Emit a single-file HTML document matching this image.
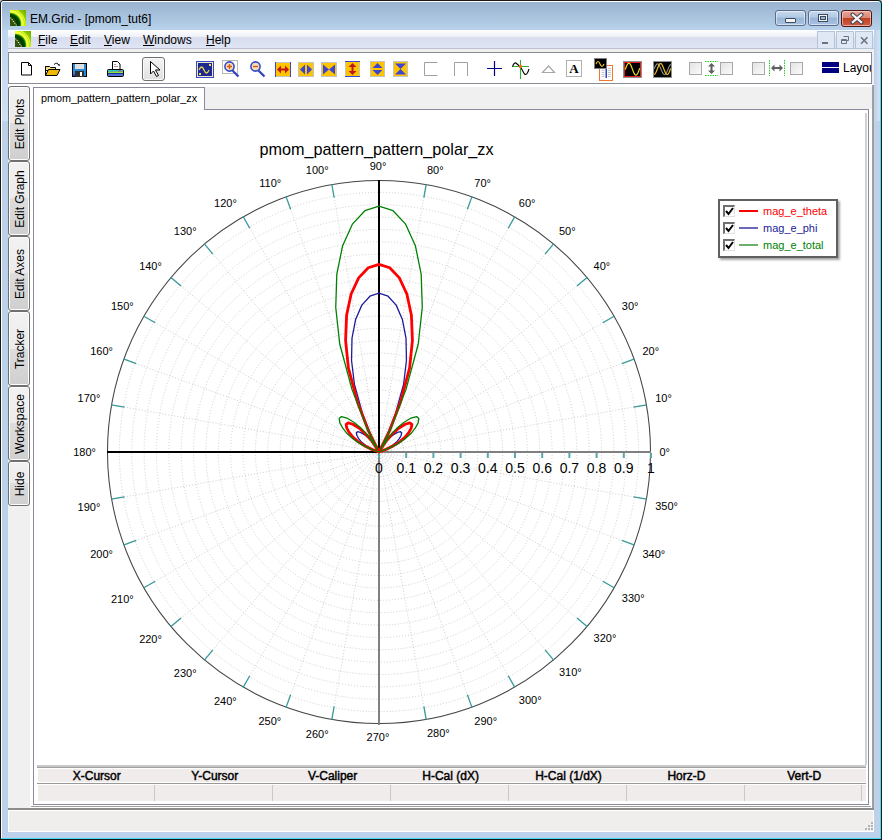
<!DOCTYPE html><html><head><meta charset="utf-8"><style>
html,body{margin:0;padding:0}
body{width:882px;height:840px;position:relative;overflow:hidden;background:#c4c8cc;font-family:"Liberation Sans", sans-serif}
div,svg{position:absolute}
svg text{font-family:"Liberation Sans", sans-serif}
</style></head><body>
<div style="left:0;top:0;width:882px;height:840px;background:#1a1a1a;border-radius:4px 4px 0 0"></div>
<div style="left:1px;top:1px;width:880px;height:838px;background:#48d8f0;border-radius:3px 3px 0 0"></div>
<div style="left:1px;top:1px;width:879px;height:837px;background:#fff;border-radius:3px 3px 0 0"></div>
<div style="left:2px;top:2px;width:878px;height:836px;background:#bcd2ea;border-radius:2px 2px 0 0"></div>
<div style="left:2px;top:2px;width:878px;height:28px;background:linear-gradient(#98b2cf,#b9d2eb);border-radius:2px 2px 0 0"></div>
<div style="left:2px;top:30px;width:6px;height:91px;background:linear-gradient(#c0d6ee,#cfe0f3)"></div>
<div style="left:874px;top:30px;width:6px;height:91px;background:linear-gradient(90deg,#bcd2ea,#d2e2f4)"></div>
<svg style="position:absolute;left:10px;top:10px" width="16" height="16" viewBox="0 0 16 16">
<defs><radialGradient id="lg10" cx="0" cy="14" r="21.3" gradientUnits="userSpaceOnUse">
<stop offset="0" stop-color="#3a5a10"/><stop offset="0.26" stop-color="#2a5000"/><stop offset="0.34" stop-color="#003a00"/><stop offset="0.45" stop-color="#004a00"/><stop offset="0.5" stop-color="#30a000"/><stop offset="0.55" stop-color="#f0ff30"/><stop offset="0.63" stop-color="#f4ff40"/><stop offset="0.67" stop-color="#b8e800"/><stop offset="0.71" stop-color="#d8ff40"/><stop offset="0.76" stop-color="#90c800"/><stop offset="1" stop-color="#70a800"/></radialGradient></defs>
<rect width="16" height="16" fill="url(#lg10)"/>
<path d="M0.5 7.5 L6.5 15.5" stroke="#e8e8e0" stroke-width="1.1" stroke-dasharray="1.2 1"/>
</svg>
<div style="left:30px;top:11px;height:16px;line-height:16px;font-size:12px;color:#000;white-space:nowrap">EM.Grid - [pmom_tut6]</div>
<div style="position:absolute;left:775px;top:10px;width:31px;height:16px;border:1px solid #5a6e8c;border-radius:3px;background:linear-gradient(#c8daee 0%,#b0c8e4 45%,#98b4d6 50%,#a8c2e2 100%);box-sizing:border-box;box-shadow:inset 0 0 0 1px rgba(255,255,255,0.5)"></div>
<div style="position:absolute;left:808px;top:10px;width:31px;height:16px;border:1px solid #5a6e8c;border-radius:3px;background:linear-gradient(#c8daee 0%,#b0c8e4 45%,#98b4d6 50%,#a8c2e2 100%);box-sizing:border-box;box-shadow:inset 0 0 0 1px rgba(255,255,255,0.5)"></div>
<div style="position:absolute;left:841px;top:10px;width:31px;height:17px;border:1px solid #4a1818;border-radius:3px;background:linear-gradient(#e8a898 0%,#d88878 45%,#c04020 50%,#d06048 100%);box-sizing:border-box;box-shadow:inset 0 0 0 1px rgba(255,220,210,0.6)"></div>
<div style="position:absolute;left:785px;top:18px;width:11px;height:5px;background:#f4f4f4;border:1px solid #3a4a60;border-radius:1px;box-sizing:border-box"></div>
<div style="position:absolute;left:818px;top:14px;width:10px;height:8px;border:1px solid #3a4a60;box-sizing:border-box;background:#f4f4f4"></div>
<div style="position:absolute;left:820px;top:16px;width:6px;height:4px;border:1px solid #3a4a60;box-sizing:border-box;background:#9ab4d4"></div>
<svg style="position:absolute;left:849px;top:12px" width="16" height="13" viewBox="0 0 16 13"><path d="M3.5 2.5 L12.5 10.5 M12.5 2.5 L3.5 10.5" stroke="#3a3a48" stroke-width="4" stroke-linecap="round"/><path d="M3.8 2.8 L12.2 10.2 M12.2 2.8 L3.8 10.2" stroke="#f4f4f4" stroke-width="2.2" stroke-linecap="square"/></svg>
<div style="left:8px;top:30px;width:866px;height:18px;background:linear-gradient(#ffffff 0%,#eef0f8 38%,#d8ddef 42%,#e0e5f5 100%)"></div>
<div style="left:8px;top:48px;width:866px;height:1px;background:#bcc0d0"></div>
<svg style="position:absolute;left:15px;top:31px" width="16" height="16" viewBox="0 0 16 16">
<defs><radialGradient id="lg15" cx="0" cy="14" r="21.3" gradientUnits="userSpaceOnUse">
<stop offset="0" stop-color="#3a5a10"/><stop offset="0.26" stop-color="#2a5000"/><stop offset="0.34" stop-color="#003a00"/><stop offset="0.45" stop-color="#004a00"/><stop offset="0.5" stop-color="#30a000"/><stop offset="0.55" stop-color="#f0ff30"/><stop offset="0.63" stop-color="#f4ff40"/><stop offset="0.67" stop-color="#b8e800"/><stop offset="0.71" stop-color="#d8ff40"/><stop offset="0.76" stop-color="#90c800"/><stop offset="1" stop-color="#70a800"/></radialGradient></defs>
<rect width="16" height="16" fill="url(#lg15)"/>
<path d="M0.5 7.5 L6.5 15.5" stroke="#e8e8e0" stroke-width="1.1" stroke-dasharray="1.2 1"/>
</svg>
<div style="position:absolute;left:38px;top:32px;height:16px;line-height:16px;font-size:12px;color:#000"><span style="text-decoration:underline">F</span>ile</div>
<div style="position:absolute;left:70px;top:32px;height:16px;line-height:16px;font-size:12px;color:#000"><span style="text-decoration:underline">E</span>dit</div>
<div style="position:absolute;left:104px;top:32px;height:16px;line-height:16px;font-size:12px;color:#000"><span style="text-decoration:underline">V</span>iew</div>
<div style="position:absolute;left:143px;top:32px;height:16px;line-height:16px;font-size:12px;color:#000"><span style="text-decoration:underline">W</span>indows</div>
<div style="position:absolute;left:206px;top:32px;height:16px;line-height:16px;font-size:12px;color:#000"><span style="text-decoration:underline">H</span>elp</div>
<div style="position:absolute;left:817px;top:31px;width:18px;height:18px;border:1px solid #b4c4d8;background:#dfe8f4;box-sizing:border-box"></div>
<div style="position:absolute;left:836px;top:31px;width:18px;height:18px;border:1px solid #b4c4d8;background:#dfe8f4;box-sizing:border-box"></div>
<div style="position:absolute;left:855px;top:31px;width:18px;height:18px;border:1px solid #b4c4d8;background:#dfe8f4;box-sizing:border-box"></div>
<div style="position:absolute;left:822px;top:42px;width:6px;height:2px;background:#6a7280"></div>
<svg style="position:absolute;left:836px;top:31px" width="18" height="18"><path d="M7.5 5.5h5v4h-1.5 M5.5 8.5h5v4h-5z M5.5 9.5h5" fill="none" stroke="#6a7280" stroke-width="1"/></svg>
<svg style="position:absolute;left:855px;top:31px" width="18" height="18"><path d="M6 6.3L12.5 12.7M12.5 6.3L6 12.7" stroke="#6a7280" stroke-width="1.6"/></svg>
<div style="left:8px;top:49px;width:866px;height:761px;background:#f0f0f0"></div>
<div style="left:8px;top:52px;width:864px;height:32px;background:#fff;border:1px solid #8a8c94;box-sizing:border-box"></div>
<svg style="position:absolute;left:21px;top:62px;overflow:visible" width="12" height="14" viewBox="0 0 12 14"><path d="M0.5 0.5h7l3 3v9.5h-10z" fill="#fff" stroke="#000"/><path d="M7.5 0.5v3h3" fill="none" stroke="#000"/></svg>
<svg style="position:absolute;left:45px;top:62px;overflow:visible" width="16" height="15" viewBox="0 0 16 15"><path d="M0.5 4.5h4l1 1h5v3h-10z" fill="#f8e080" stroke="#000"/><path d="M0.5 13.5l3-6h11.5l-3 6z" fill="#f0b800" stroke="#000"/><path d="M0.5 4.5v9" stroke="#000"/><path d="M9 2.5q3-3 5 1" fill="none" stroke="#000"/><path d="M13 3l2 1l-0.5-2z" fill="#000"/></svg>
<svg style="position:absolute;left:72px;top:63px;overflow:visible" width="15" height="14" viewBox="0 0 15 14"><rect x="0.5" y="0.5" width="14" height="13" fill="#2b8ad8" stroke="#000"/><rect x="3" y="1" width="9" height="5" fill="#e0e0e0"/><rect x="3" y="8" width="9" height="6" fill="#303030"/><rect x="8" y="9" width="2" height="4" fill="#fff"/><rect x="1" y="11" width="2" height="2" fill="#4040d0"/></svg>
<svg style="position:absolute;left:107px;top:61px;overflow:visible" width="18" height="16" viewBox="0 0 18 16"><path d="M5.5 0.5h5l2.5 2.5v6h-7.5z" fill="#fff" stroke="#000"/><rect x="7" y="3" width="2" height="1" fill="#999"/><rect x="7" y="5" width="4" height="1" fill="#999"/><rect x="0.5" y="8.5" width="16" height="7" rx="1.2" fill="#2850b8" stroke="#000"/><rect x="1" y="9" width="15" height="1.5" fill="#28c8d8"/><rect x="1" y="10.5" width="15" height="1.5" fill="#90e040"/><rect x="11" y="9.5" width="3" height="1" fill="#e04040"/><rect x="1" y="12" width="15" height="1" fill="#1830a0"/><rect x="1" y="13" width="15" height="2" fill="#5070d8"/></svg>
<div style="position:absolute;left:142px;top:57px;width:23px;height:24px;border:1px solid #6e6e6e;border-radius:3px;background:linear-gradient(#f4f4f4,#e0e0e0);box-sizing:border-box;box-shadow:inset 0 0 0 1px #fafafa"></div>
<svg style="position:absolute;left:150px;top:61px;overflow:visible" width="10" height="17" viewBox="0 0 10 17"><path d="M0.5 0.5v12.5l3-3l3 5.5l2-1l-3-5.5h4.5z" fill="#fff" stroke="#000" stroke-linejoin="miter"/></svg>
<svg style="position:absolute;left:196px;top:61px;overflow:visible" width="18" height="17" viewBox="0 0 18 17"><rect x="0" y="0" width="18" height="17" fill="#3848c8"/><rect x="1" y="1" width="16" height="15" fill="#f0e8c0"/><rect x="2" y="2" width="14" height="13" fill="#1a2a90"/><path d="M3 9q2.5-6 5 0t5 0" fill="none" stroke="#f0d040" stroke-width="1.3"/><rect x="13" y="3" width="2" height="2" fill="#f8e040"/><rect x="3" y="12" width="2" height="2" fill="#f8e040"/></svg>
<svg style="position:absolute;left:222px;top:60px;overflow:visible" width="18" height="18" viewBox="0 0 18 18"><rect x="0.5" y="0.5" width="15" height="13" fill="none" stroke="#b8b8b8"/><path d="M10 10l6.5 6.5" stroke="#3040c0" stroke-width="2.2"/><path d="M9.8 9.8l1.5 1.5" stroke="#40a040" stroke-width="1"/><circle cx="7.5" cy="6.5" r="4.6" fill="#f0e0b0" stroke="#3848d0" stroke-width="1.6"/><path d="M5 6.5h5M7.5 4v5" stroke="#e05010" stroke-width="1.3"/></svg>
<svg style="position:absolute;left:248px;top:60px;overflow:visible" width="18" height="18" viewBox="0 0 18 18"><path d="M10 10l6.5 6.5" stroke="#3040c0" stroke-width="2.2"/><path d="M9.8 9.8l1.5 1.5" stroke="#40a040" stroke-width="1"/><circle cx="7.5" cy="6.5" r="4.6" fill="#f0e0b0" stroke="#3848d0" stroke-width="1.6"/><path d="M5 6.5h5" stroke="#e05010" stroke-width="1.3"/></svg>
<svg style="position:absolute;left:275px;top:62px;overflow:visible" width="16" height="15" viewBox="0 0 16 15"><rect x="0" y="0" width="16" height="15" fill="#ffc400"/><rect x="1" y="0" width="14" height="1" fill="#c4c4c4"/><rect x="1" y="14" width="14" height="1" fill="#c4c4c4"/><rect x="0" y="0" width="1" height="15" fill="#3c46d2"/><rect x="15" y="0" width="1" height="15" fill="#3c46d2"/><path d="M2 7.5l4-4v3h4v-3l4 4l-4 4v-3h-4v3z" fill="#c01818"/></svg>
<svg style="position:absolute;left:298px;top:62px;overflow:visible" width="16" height="15" viewBox="0 0 16 15"><rect x="0.5" y="0.5" width="15" height="14" fill="#ffc400" stroke="#c4c4c4"/><path d="M2 7.5l5-5v10z M14 7.5l-5-5v10z" fill="#3c46d2"/></svg>
<svg style="position:absolute;left:321px;top:62px;overflow:visible" width="16" height="15" viewBox="0 0 16 15"><rect x="0.5" y="0.5" width="15" height="14" fill="#ffc400" stroke="#c4c4c4"/><path d="M2 2.5l6 5l-6 5z M14 2.5l-6 5l6 5z" fill="#3c46d2"/></svg>
<svg style="position:absolute;left:345px;top:61px;overflow:visible" width="15" height="16" viewBox="0 0 15 16"><rect x="0" y="0" width="15" height="16" fill="#ffc400"/><rect x="0" y="1" width="1" height="14" fill="#c4c4c4"/><rect x="14" y="1" width="1" height="14" fill="#c4c4c4"/><rect x="0" y="0" width="15" height="1" fill="#3c46d2"/><rect x="0" y="15" width="15" height="1" fill="#3c46d2"/><path d="M7.5 2l4 4h-3v4h3l-4 4l-4-4h3v-4h-3z" fill="#c01818"/></svg>
<svg style="position:absolute;left:370px;top:61px;overflow:visible" width="15" height="16" viewBox="0 0 15 16"><rect x="0.5" y="0.5" width="14" height="15" fill="#ffc400" stroke="#c4c4c4"/><path d="M7.5 2l5 5h-10z M7.5 14l5-5h-10z" fill="#3c46d2"/></svg>
<svg style="position:absolute;left:393px;top:61px;overflow:visible" width="15" height="16" viewBox="0 0 15 16"><rect x="0.5" y="0.5" width="14" height="15" fill="#ffc400" stroke="#c4c4c4"/><path d="M2 2.5h11l-5.5 5.5z M2 13.5h11l-5.5-5.5z" fill="#3c46d2"/></svg>
<svg style="position:absolute;left:424px;top:62px;overflow:visible" width="14" height="14" viewBox="0 0 14 14"><path d="M13.5 0.5h-13v13h13" fill="none" stroke="#a0a0a0"/></svg>
<svg style="position:absolute;left:454px;top:62px;overflow:visible" width="14" height="14" viewBox="0 0 14 14"><path d="M0.5 14v-13.5h13v13.5" fill="none" stroke="#a0a0a0"/></svg>
<svg style="position:absolute;left:487px;top:61px;overflow:visible" width="16" height="16" viewBox="0 0 16 16"><path d="M0 7.5h15M7.5 0v15" stroke="#000080" stroke-width="1.2"/></svg>
<svg style="position:absolute;left:511px;top:59px;overflow:visible" width="20" height="21" viewBox="0 0 20 21"><path d="M1 7.5h17M9.5 1v19" stroke="#30b030" stroke-width="1.1"/><path d="M1.5 7.5Q3.5 2.5 5.5 4.5T9.5 7.5Q11.5 12 13.5 15Q16 17 18 10" fill="none" stroke="#000" stroke-width="1.1"/><rect x="8" y="6" width="3" height="3" fill="#f07020"/></svg>
<svg style="position:absolute;left:542px;top:65px;overflow:visible" width="14" height="8" viewBox="0 0 14 8"><path d="M0.5 7.5l6-6.5l6 6.5z" fill="none" stroke="#a8a8a8" stroke-width="1.2"/></svg>
<svg style="position:absolute;left:566px;top:60px;overflow:visible" width="17" height="17" viewBox="0 0 17 17"><rect x="0.5" y="0.5" width="15" height="16" fill="#fff" stroke="#b0b0b0"/><text x="8" y="13" style="font-family:Liberation Serif,serif;font-weight:bold;font-size:13px" text-anchor="middle" fill="#000">A</text></svg>
<svg style="position:absolute;left:594px;top:58px;overflow:visible" width="20" height="23" viewBox="0 0 20 23"><rect x="5.5" y="7.5" width="13" height="15" fill="#fff" stroke="#f07830"/><path d="M7.5 10.5h3M7.5 12.5h3M7.5 14.5h3M7.5 16.5h3M7.5 18.5h3M14 10.5h3M14 12.5h3M14 14.5h3M14 16.5h3M14 18.5h3" stroke="#b8b8b8" stroke-width="0.8"/><rect x="11.5" y="9" width="1.5" height="11" fill="#3040d0"/><rect x="0.5" y="0.5" width="12" height="10" fill="#000" stroke="#808080"/><path d="M2 6q2-5 4 0t4 0" fill="none" stroke="#f0d020" stroke-width="1.1"/></svg>
<svg style="position:absolute;left:623px;top:61px;overflow:visible" width="19" height="17" viewBox="0 0 19 17"><rect x="0.5" y="0.5" width="18" height="16" fill="#000" stroke="#909090"/><rect x="1.5" y="1.5" width="16" height="14" fill="none" stroke="#e02020"/><polyline points="2.2,8.6 2.7,7.3 3.2,6.0 3.7,4.8 4.2,3.8 4.7,2.9 5.2,2.4 5.7,2.1 6.2,2.2 6.7,2.5 7.2,3.1 7.7,4.0 8.2,5.0 8.7,6.2 9.2,7.6 9.7,8.9 10.2,10.2 10.7,11.4 11.2,12.4 11.7,13.3 12.2,13.8 12.7,14.1 13.2,14.0 13.7,13.7 14.2,13.1 14.7,12.2 15.2,11.2 15.7,10.0 16.2,8.6 16.7,7.3" fill="none" stroke="#f0e020" stroke-width="1.2"/></svg>
<svg style="position:absolute;left:653px;top:61px;overflow:visible" width="19" height="17" viewBox="0 0 19 17"><rect x="0.5" y="0.5" width="18" height="16" fill="#000" stroke="#909090"/><svg x="1" y="1" width="17" height="15" viewBox="1 1 17 15" overflow="hidden"><polyline points="1.2,7.7 1.7,6.6 2.2,5.5 2.7,4.5 3.2,3.8 3.7,3.2 4.2,2.9 4.7,2.9 5.2,3.2 5.7,3.7 6.2,4.4 6.7,5.3 7.2,6.3 7.7,7.5 8.2,8.7 8.7,9.8 9.2,10.9 9.7,11.9 10.2,12.6 10.7,13.2 11.2,13.5 11.7,13.5 12.2,13.2 12.7,12.7 13.2,12.0 13.7,11.1 14.2,10.1 14.7,8.9 15.2,7.7 15.7,6.6 16.2,5.5 16.7,4.5 17.2,3.8 17.7,3.2" fill="none" stroke="#909090" stroke-width="1.1"/><polyline points="1.2,13.5 1.7,13.2 2.2,12.6 2.7,11.8 3.2,10.8 3.7,9.5 4.2,8.3 4.7,7.0 5.2,5.7 5.7,4.6 6.2,3.7 6.7,3.0 7.2,2.6 7.7,2.5 8.2,2.7 8.7,3.2 9.2,4.0 9.7,5.0 10.2,6.2 10.7,7.5 11.2,8.8 11.7,10.0 12.2,11.2 12.7,12.2 13.2,12.9 13.7,13.3 14.2,13.5 14.7,13.3 15.2,12.9 15.7,12.2 16.2,11.2 16.7,10.0 17.2,8.8 17.7,7.5" fill="none" stroke="#f0c020" stroke-width="1.2"/></svg></svg>
<div style="position:absolute;left:689px;top:62px;width:13px;height:13px;border:1px solid #a8a8a8;background:linear-gradient(135deg,#e4e4e4,#fafafa);box-sizing:border-box"></div>
<div style="position:absolute;left:720px;top:62px;width:13px;height:13px;border:1px solid #a8a8a8;background:linear-gradient(135deg,#e4e4e4,#fafafa);box-sizing:border-box"></div>
<div style="position:absolute;left:752px;top:62px;width:13px;height:13px;border:1px solid #a8a8a8;background:linear-gradient(135deg,#e4e4e4,#fafafa);box-sizing:border-box"></div>
<div style="position:absolute;left:790px;top:62px;width:13px;height:13px;border:1px solid #a8a8a8;background:linear-gradient(135deg,#e4e4e4,#fafafa);box-sizing:border-box"></div>
<svg style="position:absolute;left:705px;top:61px;overflow:visible" width="14" height="15" viewBox="0 0 14 15"><path d="M0 0.5h13M0 14.5h13" stroke="#20d020" stroke-dasharray="1.5 1"/><path d="M6.5 2l3.5 3.5h-2.5v4h2.5l-3.5 3.5l-3.5-3.5h2.5v-4h-2.5z" fill="#606060"/></svg>
<svg style="position:absolute;left:769px;top:60px;overflow:visible" width="17" height="17" viewBox="0 0 17 17"><path d="M0.5 0v16M15.5 0v16" stroke="#20d020" stroke-dasharray="1.5 1"/><path d="M2 8l3.5-3.5v2.5h5v-2.5l3.5 3.5l-3.5 3.5v-2.5h-5v2.5z" fill="#606060"/></svg>
<div style="position:absolute;left:822px;top:62px;width:17px;height:5px;background:#000080"></div>
<div style="position:absolute;left:822px;top:68px;width:17px;height:5px;background:#000080"></div>
<div style="position:absolute;left:843px;top:58px;width:28px;overflow:hidden;height:20px;line-height:20px;font-size:12px;color:#000;white-space:nowrap">Layout</div>
<div style="left:8px;top:84px;width:866px;height:3px;background:#fff"></div>
<div style="left:30px;top:87px;width:842px;height:721px;background:#fff"></div>
<div style="left:872px;top:85px;width:2px;height:725px;background:#a0a0a0"></div>
<div style="left:8px;top:808px;width:866px;height:2px;background:#8c8c8c"></div>
<div style="left:31px;top:806px;width:840px;height:1px;background:#a0a0a0"></div>
<div style="left:8px;top:87px;width:22px;height:721px;background:#f0f0f0"></div>
<div style="position:absolute;left:8px;top:86px;width:22px;height:75px;border:1px solid #707070;border-radius:3px;box-sizing:border-box;background:linear-gradient(#f2f2f2 0%,#ebebeb 50%,#dddddd 50%,#cfcfcf 100%);box-shadow:inset 0 0 0 1px #fcfcfc"></div>
<div style="position:absolute;left:20px;top:123.5px;width:0;height:0"><div style="position:absolute;left:0;top:0;transform:translate(-50%,-50%) rotate(-90deg);font-size:12px;line-height:14px;white-space:nowrap;color:#000">Edit Plots</div></div>
<div style="position:absolute;left:8px;top:161px;width:22px;height:75px;border:1px solid #707070;border-radius:3px;box-sizing:border-box;background:linear-gradient(#f2f2f2 0%,#ebebeb 50%,#dddddd 50%,#cfcfcf 100%);box-shadow:inset 0 0 0 1px #fcfcfc"></div>
<div style="position:absolute;left:20px;top:198.5px;width:0;height:0"><div style="position:absolute;left:0;top:0;transform:translate(-50%,-50%) rotate(-90deg);font-size:12px;line-height:14px;white-space:nowrap;color:#000">Edit Graph</div></div>
<div style="position:absolute;left:8px;top:236px;width:22px;height:75px;border:1px solid #707070;border-radius:3px;box-sizing:border-box;background:linear-gradient(#f2f2f2 0%,#ebebeb 50%,#dddddd 50%,#cfcfcf 100%);box-shadow:inset 0 0 0 1px #fcfcfc"></div>
<div style="position:absolute;left:20px;top:273.5px;width:0;height:0"><div style="position:absolute;left:0;top:0;transform:translate(-50%,-50%) rotate(-90deg);font-size:12px;line-height:14px;white-space:nowrap;color:#000">Edit Axes</div></div>
<div style="position:absolute;left:8px;top:311px;width:22px;height:75px;border:1px solid #707070;border-radius:3px;box-sizing:border-box;background:linear-gradient(#f2f2f2 0%,#ebebeb 50%,#dddddd 50%,#cfcfcf 100%);box-shadow:inset 0 0 0 1px #fcfcfc"></div>
<div style="position:absolute;left:20px;top:348.5px;width:0;height:0"><div style="position:absolute;left:0;top:0;transform:translate(-50%,-50%) rotate(-90deg);font-size:12px;line-height:14px;white-space:nowrap;color:#000">Tracker</div></div>
<div style="position:absolute;left:8px;top:386px;width:22px;height:75px;border:1px solid #707070;border-radius:3px;box-sizing:border-box;background:linear-gradient(#f2f2f2 0%,#ebebeb 50%,#dddddd 50%,#cfcfcf 100%);box-shadow:inset 0 0 0 1px #fcfcfc"></div>
<div style="position:absolute;left:20px;top:423.5px;width:0;height:0"><div style="position:absolute;left:0;top:0;transform:translate(-50%,-50%) rotate(-90deg);font-size:12px;line-height:14px;white-space:nowrap;color:#000">Workspace</div></div>
<div style="position:absolute;left:8px;top:461px;width:22px;height:45px;border:1px solid #707070;border-radius:3px;box-sizing:border-box;background:linear-gradient(#f2f2f2 0%,#ebebeb 50%,#dddddd 50%,#cfcfcf 100%);box-shadow:inset 0 0 0 1px #fcfcfc"></div>
<div style="position:absolute;left:20px;top:483.5px;width:0;height:0"><div style="position:absolute;left:0;top:0;transform:translate(-50%,-50%) rotate(-90deg);font-size:12px;line-height:14px;white-space:nowrap;color:#000">Hide</div></div>
<div style="left:33px;top:87px;width:839px;height:22px;background:#f0f0f0"></div>
<div style="left:33px;top:109px;width:836px;height:696px;border:1px solid #8a8a9a;box-sizing:border-box;background:#fff"></div>
<div style="left:33px;top:87px;width:172px;height:23px;border:1px solid #8a8a9a;border-bottom:none;box-sizing:border-box;background:#fff"></div>
<div style="left:41px;top:90px;height:16px;line-height:16px;font-size:10.8px;color:#000;white-space:nowrap">pmom_pattern_pattern_polar_zx</div>
<div style="left:865px;top:113px;width:2px;height:652px;background:#d0d0d0"></div>
<svg style="left:0;top:0" width="882" height="840" viewBox="0 0 882 840">
<defs><clipPath id="pc"><rect x="34" y="110" width="831" height="655"/></clipPath></defs><g clip-path="url(#pc)">
<text x="376.5" y="154.6" font-size="16.2" text-anchor="middle">pmom_pattern_pattern_polar_zx</text>
<circle cx="379.0" cy="452.0" r="12.36" fill="none" stroke="#cecece" stroke-width="1" stroke-dasharray="1 2"/>
<circle cx="379.0" cy="452.0" r="24.73" fill="none" stroke="#cecece" stroke-width="1" stroke-dasharray="1 2"/>
<circle cx="379.0" cy="452.0" r="37.09" fill="none" stroke="#cecece" stroke-width="1" stroke-dasharray="1 2"/>
<circle cx="379.0" cy="452.0" r="49.45" fill="none" stroke="#cecece" stroke-width="1" stroke-dasharray="1 2"/>
<circle cx="379.0" cy="452.0" r="61.82" fill="none" stroke="#cecece" stroke-width="1" stroke-dasharray="1 2"/>
<circle cx="379.0" cy="452.0" r="74.18" fill="none" stroke="#cecece" stroke-width="1" stroke-dasharray="1 2"/>
<circle cx="379.0" cy="452.0" r="86.55" fill="none" stroke="#cecece" stroke-width="1" stroke-dasharray="1 2"/>
<circle cx="379.0" cy="452.0" r="98.91" fill="none" stroke="#cecece" stroke-width="1" stroke-dasharray="1 2"/>
<circle cx="379.0" cy="452.0" r="111.27" fill="none" stroke="#cecece" stroke-width="1" stroke-dasharray="1 2"/>
<circle cx="379.0" cy="452.0" r="123.64" fill="none" stroke="#cecece" stroke-width="1" stroke-dasharray="1 2"/>
<circle cx="379.0" cy="452.0" r="136.00" fill="none" stroke="#cecece" stroke-width="1" stroke-dasharray="1 2"/>
<circle cx="379.0" cy="452.0" r="148.36" fill="none" stroke="#cecece" stroke-width="1" stroke-dasharray="1 2"/>
<circle cx="379.0" cy="452.0" r="160.73" fill="none" stroke="#cecece" stroke-width="1" stroke-dasharray="1 2"/>
<circle cx="379.0" cy="452.0" r="173.09" fill="none" stroke="#cecece" stroke-width="1" stroke-dasharray="1 2"/>
<circle cx="379.0" cy="452.0" r="185.45" fill="none" stroke="#cecece" stroke-width="1" stroke-dasharray="1 2"/>
<circle cx="379.0" cy="452.0" r="197.82" fill="none" stroke="#cecece" stroke-width="1" stroke-dasharray="1 2"/>
<circle cx="379.0" cy="452.0" r="210.18" fill="none" stroke="#cecece" stroke-width="1" stroke-dasharray="1 2"/>
<circle cx="379.0" cy="452.0" r="222.55" fill="none" stroke="#cecece" stroke-width="1" stroke-dasharray="1 2"/>
<circle cx="379.0" cy="452.0" r="234.91" fill="none" stroke="#cecece" stroke-width="1" stroke-dasharray="1 2"/>
<circle cx="379.0" cy="452.0" r="247.27" fill="none" stroke="#cecece" stroke-width="1" stroke-dasharray="1 2"/>
<circle cx="379.0" cy="452.0" r="259.64" fill="none" stroke="#cecece" stroke-width="1" stroke-dasharray="1 2"/>
<line x1="379.0" y1="452.0" x2="651.00" y2="452.00" stroke="#cecece" stroke-width="1" stroke-dasharray="1 2"/>
<line x1="379.0" y1="452.0" x2="646.87" y2="404.77" stroke="#cecece" stroke-width="1" stroke-dasharray="1 2"/>
<line x1="379.0" y1="452.0" x2="634.60" y2="358.97" stroke="#cecece" stroke-width="1" stroke-dasharray="1 2"/>
<line x1="379.0" y1="452.0" x2="614.56" y2="316.00" stroke="#cecece" stroke-width="1" stroke-dasharray="1 2"/>
<line x1="379.0" y1="452.0" x2="587.36" y2="277.16" stroke="#cecece" stroke-width="1" stroke-dasharray="1 2"/>
<line x1="379.0" y1="452.0" x2="553.84" y2="243.64" stroke="#cecece" stroke-width="1" stroke-dasharray="1 2"/>
<line x1="379.0" y1="452.0" x2="515.00" y2="216.44" stroke="#cecece" stroke-width="1" stroke-dasharray="1 2"/>
<line x1="379.0" y1="452.0" x2="472.03" y2="196.40" stroke="#cecece" stroke-width="1" stroke-dasharray="1 2"/>
<line x1="379.0" y1="452.0" x2="426.23" y2="184.13" stroke="#cecece" stroke-width="1" stroke-dasharray="1 2"/>
<line x1="379.0" y1="452.0" x2="379.00" y2="180.00" stroke="#cecece" stroke-width="1" stroke-dasharray="1 2"/>
<line x1="379.0" y1="452.0" x2="331.77" y2="184.13" stroke="#cecece" stroke-width="1" stroke-dasharray="1 2"/>
<line x1="379.0" y1="452.0" x2="285.97" y2="196.40" stroke="#cecece" stroke-width="1" stroke-dasharray="1 2"/>
<line x1="379.0" y1="452.0" x2="243.00" y2="216.44" stroke="#cecece" stroke-width="1" stroke-dasharray="1 2"/>
<line x1="379.0" y1="452.0" x2="204.16" y2="243.64" stroke="#cecece" stroke-width="1" stroke-dasharray="1 2"/>
<line x1="379.0" y1="452.0" x2="170.64" y2="277.16" stroke="#cecece" stroke-width="1" stroke-dasharray="1 2"/>
<line x1="379.0" y1="452.0" x2="143.44" y2="316.00" stroke="#cecece" stroke-width="1" stroke-dasharray="1 2"/>
<line x1="379.0" y1="452.0" x2="123.40" y2="358.97" stroke="#cecece" stroke-width="1" stroke-dasharray="1 2"/>
<line x1="379.0" y1="452.0" x2="111.13" y2="404.77" stroke="#cecece" stroke-width="1" stroke-dasharray="1 2"/>
<line x1="379.0" y1="452.0" x2="107.00" y2="452.00" stroke="#cecece" stroke-width="1" stroke-dasharray="1 2"/>
<line x1="379.0" y1="452.0" x2="111.13" y2="499.23" stroke="#cecece" stroke-width="1" stroke-dasharray="1 2"/>
<line x1="379.0" y1="452.0" x2="123.40" y2="545.03" stroke="#cecece" stroke-width="1" stroke-dasharray="1 2"/>
<line x1="379.0" y1="452.0" x2="143.44" y2="588.00" stroke="#cecece" stroke-width="1" stroke-dasharray="1 2"/>
<line x1="379.0" y1="452.0" x2="170.64" y2="626.84" stroke="#cecece" stroke-width="1" stroke-dasharray="1 2"/>
<line x1="379.0" y1="452.0" x2="204.16" y2="660.36" stroke="#cecece" stroke-width="1" stroke-dasharray="1 2"/>
<line x1="379.0" y1="452.0" x2="243.00" y2="687.56" stroke="#cecece" stroke-width="1" stroke-dasharray="1 2"/>
<line x1="379.0" y1="452.0" x2="285.97" y2="707.60" stroke="#cecece" stroke-width="1" stroke-dasharray="1 2"/>
<line x1="379.0" y1="452.0" x2="331.77" y2="719.87" stroke="#cecece" stroke-width="1" stroke-dasharray="1 2"/>
<line x1="379.0" y1="452.0" x2="379.00" y2="724.00" stroke="#cecece" stroke-width="1" stroke-dasharray="1 2"/>
<line x1="379.0" y1="452.0" x2="426.23" y2="719.87" stroke="#cecece" stroke-width="1" stroke-dasharray="1 2"/>
<line x1="379.0" y1="452.0" x2="472.03" y2="707.60" stroke="#cecece" stroke-width="1" stroke-dasharray="1 2"/>
<line x1="379.0" y1="452.0" x2="515.00" y2="687.56" stroke="#cecece" stroke-width="1" stroke-dasharray="1 2"/>
<line x1="379.0" y1="452.0" x2="553.84" y2="660.36" stroke="#cecece" stroke-width="1" stroke-dasharray="1 2"/>
<line x1="379.0" y1="452.0" x2="587.36" y2="626.84" stroke="#cecece" stroke-width="1" stroke-dasharray="1 2"/>
<line x1="379.0" y1="452.0" x2="614.56" y2="588.00" stroke="#cecece" stroke-width="1" stroke-dasharray="1 2"/>
<line x1="379.0" y1="452.0" x2="634.60" y2="545.03" stroke="#cecece" stroke-width="1" stroke-dasharray="1 2"/>
<line x1="379.0" y1="452.0" x2="646.87" y2="499.23" stroke="#cecece" stroke-width="1" stroke-dasharray="1 2"/>
<circle cx="379.0" cy="452.0" r="271.5" fill="none" stroke="#454545" stroke-width="1.05"/>
<line x1="637.40" y1="452.00" x2="651.00" y2="452.00" stroke="#379a9a" stroke-width="1.3"/>
<line x1="633.47" y1="407.13" x2="646.87" y2="404.77" stroke="#379a9a" stroke-width="1.3"/>
<line x1="621.82" y1="363.62" x2="634.60" y2="358.97" stroke="#379a9a" stroke-width="1.3"/>
<line x1="602.78" y1="322.80" x2="614.56" y2="316.00" stroke="#379a9a" stroke-width="1.3"/>
<line x1="576.95" y1="285.90" x2="587.36" y2="277.16" stroke="#379a9a" stroke-width="1.3"/>
<line x1="545.10" y1="254.05" x2="553.84" y2="243.64" stroke="#379a9a" stroke-width="1.3"/>
<line x1="508.20" y1="228.22" x2="515.00" y2="216.44" stroke="#379a9a" stroke-width="1.3"/>
<line x1="467.38" y1="209.18" x2="472.03" y2="196.40" stroke="#379a9a" stroke-width="1.3"/>
<line x1="423.87" y1="197.53" x2="426.23" y2="184.13" stroke="#379a9a" stroke-width="1.3"/>
<line x1="379.00" y1="193.60" x2="379.00" y2="180.00" stroke="#379a9a" stroke-width="1.3"/>
<line x1="334.13" y1="197.53" x2="331.77" y2="184.13" stroke="#379a9a" stroke-width="1.3"/>
<line x1="290.62" y1="209.18" x2="285.97" y2="196.40" stroke="#379a9a" stroke-width="1.3"/>
<line x1="249.80" y1="228.22" x2="243.00" y2="216.44" stroke="#379a9a" stroke-width="1.3"/>
<line x1="212.90" y1="254.05" x2="204.16" y2="243.64" stroke="#379a9a" stroke-width="1.3"/>
<line x1="181.05" y1="285.90" x2="170.64" y2="277.16" stroke="#379a9a" stroke-width="1.3"/>
<line x1="155.22" y1="322.80" x2="143.44" y2="316.00" stroke="#379a9a" stroke-width="1.3"/>
<line x1="136.18" y1="363.62" x2="123.40" y2="358.97" stroke="#379a9a" stroke-width="1.3"/>
<line x1="124.53" y1="407.13" x2="111.13" y2="404.77" stroke="#379a9a" stroke-width="1.3"/>
<line x1="120.60" y1="452.00" x2="107.00" y2="452.00" stroke="#379a9a" stroke-width="1.3"/>
<line x1="124.53" y1="496.87" x2="111.13" y2="499.23" stroke="#379a9a" stroke-width="1.3"/>
<line x1="136.18" y1="540.38" x2="123.40" y2="545.03" stroke="#379a9a" stroke-width="1.3"/>
<line x1="155.22" y1="581.20" x2="143.44" y2="588.00" stroke="#379a9a" stroke-width="1.3"/>
<line x1="181.05" y1="618.10" x2="170.64" y2="626.84" stroke="#379a9a" stroke-width="1.3"/>
<line x1="212.90" y1="649.95" x2="204.16" y2="660.36" stroke="#379a9a" stroke-width="1.3"/>
<line x1="249.80" y1="675.78" x2="243.00" y2="687.56" stroke="#379a9a" stroke-width="1.3"/>
<line x1="290.62" y1="694.82" x2="285.97" y2="707.60" stroke="#379a9a" stroke-width="1.3"/>
<line x1="334.13" y1="706.47" x2="331.77" y2="719.87" stroke="#379a9a" stroke-width="1.3"/>
<line x1="379.00" y1="710.40" x2="379.00" y2="724.00" stroke="#379a9a" stroke-width="1.3"/>
<line x1="423.87" y1="706.47" x2="426.23" y2="719.87" stroke="#379a9a" stroke-width="1.3"/>
<line x1="467.38" y1="694.82" x2="472.03" y2="707.60" stroke="#379a9a" stroke-width="1.3"/>
<line x1="508.20" y1="675.78" x2="515.00" y2="687.56" stroke="#379a9a" stroke-width="1.3"/>
<line x1="545.10" y1="649.95" x2="553.84" y2="660.36" stroke="#379a9a" stroke-width="1.3"/>
<line x1="576.95" y1="618.10" x2="587.36" y2="626.84" stroke="#379a9a" stroke-width="1.3"/>
<line x1="602.78" y1="581.20" x2="614.56" y2="588.00" stroke="#379a9a" stroke-width="1.3"/>
<line x1="621.82" y1="540.38" x2="634.60" y2="545.03" stroke="#379a9a" stroke-width="1.3"/>
<line x1="633.47" y1="496.87" x2="646.87" y2="499.23" stroke="#379a9a" stroke-width="1.3"/>
<rect x="107" y="451" width="272" height="2" fill="#000"/>
<rect x="379" y="451" width="272" height="2" fill="#808080"/>
<rect x="378" y="180" width="2" height="272" fill="#000"/>
<rect x="378" y="453" width="2" height="272" fill="#808080"/>
<rect x="378.0" y="453" width="2" height="5" fill="#5aa8a8"/>
<rect x="405.2" y="453" width="2" height="5" fill="#5aa8a8"/>
<rect x="432.4" y="453" width="2" height="5" fill="#5aa8a8"/>
<rect x="459.6" y="453" width="2" height="5" fill="#5aa8a8"/>
<rect x="486.8" y="453" width="2" height="5" fill="#5aa8a8"/>
<rect x="514.0" y="453" width="2" height="5" fill="#5aa8a8"/>
<rect x="541.2" y="453" width="2" height="5" fill="#5aa8a8"/>
<rect x="568.4" y="453" width="2" height="5" fill="#5aa8a8"/>
<rect x="595.6" y="453" width="2" height="5" fill="#5aa8a8"/>
<rect x="622.8" y="453" width="2" height="5" fill="#5aa8a8"/>
<rect x="650.0" y="453" width="2" height="5" fill="#5aa8a8"/>
<polyline points="379.00,452.00 379.00,452.00 379.00,452.00 379.00,452.00 379.00,452.00 379.00,452.00 383.33,450.42 388.84,447.76 393.22,444.86 396.85,441.69 399.32,438.64 401.10,435.55 401.64,433.00 400.50,431.72 397.53,432.36 393.54,434.67 389.61,437.74 385.75,441.74 380.56,449.29 385.39,439.28 395.26,414.30 403.58,384.47 406.47,360.24 405.99,338.13 402.38,319.39 396.17,305.12 388.07,296.19 379.00,293.15 369.93,296.19 361.83,305.12 355.62,319.39 352.01,338.13 351.53,360.24 354.42,384.47 362.74,414.30 372.61,439.28 377.44,449.29 372.25,441.74 368.39,437.74 364.46,434.67 360.47,432.36 357.50,431.72 356.36,433.00 356.90,435.55 358.68,438.64 361.15,441.69 364.78,444.86 369.16,447.76 374.67,450.42 379.00,452.00 379.00,452.00 379.00,452.00 379.00,452.00 379.00,452.00 379.00,452.00" fill="none" stroke="#1c1c99" stroke-width="1.3" stroke-linejoin="round"/>
<polyline points="379.00,452.00 379.00,452.00 379.00,452.00 379.00,452.00 379.00,452.00 379.00,452.00 385.53,449.62 393.76,445.63 400.23,441.34 405.48,436.71 408.94,432.31 411.31,427.95 411.81,424.47 409.81,422.93 405.17,424.26 399.10,428.05 392.83,433.42 386.55,440.52 379.00,452.00 389.30,431.49 400.57,402.00 409.57,368.02 412.42,340.38 411.41,315.25 406.86,294.00 399.36,277.85 389.73,267.75 379.00,264.32 368.27,267.75 358.64,277.85 351.14,294.00 346.59,315.25 345.58,340.38 348.43,368.02 357.43,402.00 368.70,431.49 379.00,452.00 371.45,440.52 365.17,433.42 358.90,428.05 352.83,424.26 348.19,422.93 346.19,424.47 346.69,427.95 349.06,432.31 352.52,436.71 357.77,441.34 364.24,445.63 372.47,449.62 379.00,452.00 379.00,452.00 379.00,452.00 379.00,452.00 379.00,452.00 379.00,452.00" fill="none" stroke="#ff0000" stroke-width="2.8" stroke-linejoin="round"/>
<polyline points="379.00,452.00 379.00,452.00 379.00,452.00 379.00,452.00 379.00,452.00 379.00,452.00 386.84,449.15 396.74,444.35 404.55,439.17 410.94,433.56 415.18,428.20 418.14,422.86 418.86,418.55 416.57,416.56 411.07,418.01 403.81,422.44 396.44,428.58 389.13,436.60 380.56,449.29 391.12,427.87 406.01,389.38 418.22,344.24 422.26,307.50 421.18,274.05 415.37,245.72 405.63,224.18 393.05,210.71 379.00,206.12 364.95,210.71 352.37,224.18 342.63,245.72 336.82,274.05 335.74,307.50 339.78,344.24 351.99,389.38 366.88,427.87 377.44,449.29 368.87,436.60 361.56,428.58 354.19,422.44 346.93,418.01 341.43,416.56 339.14,418.55 339.86,422.86 342.82,428.20 347.06,433.56 353.45,439.17 361.26,444.35 371.16,449.15 379.00,452.00 379.00,452.00 379.00,452.00 379.00,452.00 379.00,452.00 379.00,452.00" fill="none" stroke="#008000" stroke-width="1.3" stroke-linejoin="round"/>
<text x="379.0" y="473" font-size="14" text-anchor="middle">0</text>
<text x="406.2" y="473" font-size="14" text-anchor="middle">0.1</text>
<text x="433.4" y="473" font-size="14" text-anchor="middle">0.2</text>
<text x="460.6" y="473" font-size="14" text-anchor="middle">0.3</text>
<text x="487.8" y="473" font-size="14" text-anchor="middle">0.4</text>
<text x="515.0" y="473" font-size="14" text-anchor="middle">0.5</text>
<text x="542.2" y="473" font-size="14" text-anchor="middle">0.6</text>
<text x="569.4" y="473" font-size="14" text-anchor="middle">0.7</text>
<text x="596.6" y="473" font-size="14" text-anchor="middle">0.8</text>
<text x="623.8" y="473" font-size="14" text-anchor="middle">0.9</text>
<text x="651.0" y="473" font-size="14" text-anchor="middle">1</text>
<text x="659.5" y="456.0" font-size="11" text-anchor="start">0°</text>
<text x="655.2" y="402.1" font-size="11" text-anchor="start">10°</text>
<text x="642.5" y="354.7" font-size="11" text-anchor="start">20°</text>
<text x="621.8" y="310.2" font-size="11" text-anchor="start">30°</text>
<text x="593.6" y="270.1" font-size="11" text-anchor="start">40°</text>
<text x="558.9" y="235.4" font-size="11" text-anchor="start">50°</text>
<text x="518.8" y="207.2" font-size="11" text-anchor="start">60°</text>
<text x="474.3" y="186.5" font-size="11" text-anchor="start">70°</text>
<text x="426.9" y="173.8" font-size="11" text-anchor="start">80°</text>
<text x="378.0" y="169.5" font-size="11" text-anchor="middle">90°</text>
<text x="328.6" y="173.8" font-size="11" text-anchor="end">100°</text>
<text x="281.2" y="186.5" font-size="11" text-anchor="end">110°</text>
<text x="236.8" y="207.2" font-size="11" text-anchor="end">120°</text>
<text x="196.6" y="235.4" font-size="11" text-anchor="end">130°</text>
<text x="161.9" y="270.1" font-size="11" text-anchor="end">140°</text>
<text x="133.7" y="310.2" font-size="11" text-anchor="end">150°</text>
<text x="113.0" y="354.7" font-size="11" text-anchor="end">160°</text>
<text x="100.3" y="402.1" font-size="11" text-anchor="end">170°</text>
<text x="96.0" y="456.0" font-size="11" text-anchor="end">180°</text>
<text x="100.3" y="511.3" font-size="11" text-anchor="end">190°</text>
<text x="113.0" y="558.4" font-size="11" text-anchor="end">200°</text>
<text x="133.7" y="602.5" font-size="11" text-anchor="end">210°</text>
<text x="161.9" y="642.5" font-size="11" text-anchor="end">220°</text>
<text x="196.6" y="676.9" font-size="11" text-anchor="end">230°</text>
<text x="236.7" y="704.9" font-size="11" text-anchor="end">240°</text>
<text x="281.2" y="725.4" font-size="11" text-anchor="end">250°</text>
<text x="328.6" y="738.1" font-size="11" text-anchor="end">260°</text>
<text x="378.0" y="741.4" font-size="11" text-anchor="middle">270°</text>
<text x="426.9" y="737.2" font-size="11" text-anchor="start">280°</text>
<text x="474.3" y="724.5" font-size="11" text-anchor="start">290°</text>
<text x="518.8" y="704.0" font-size="11" text-anchor="start">300°</text>
<text x="558.9" y="676.0" font-size="11" text-anchor="start">310°</text>
<text x="593.6" y="641.6" font-size="11" text-anchor="start">320°</text>
<text x="621.8" y="601.7" font-size="11" text-anchor="start">330°</text>
<text x="642.5" y="557.5" font-size="11" text-anchor="start">340°</text>
<text x="655.2" y="510.4" font-size="11" text-anchor="start">350°</text>
</g></svg>
<div style="left:718px;top:199px;width:120px;height:59px;border:2px solid #606060;box-sizing:border-box;background:#fff;box-shadow:2px 2px 2px rgba(0,0,0,0.35)"></div>
<div style="left:723px;top:205px;width:12px;height:12px;box-sizing:border-box;border-top:2px solid #707070;border-left:2px solid #707070;border-right:1px solid #e0e0e0;border-bottom:1px solid #e0e0e0;background:#fff"></div>
<svg style="left:725px;top:207px" width="10" height="9"><path d="M1 4l2.5 3l4.5-6" fill="none" stroke="#000" stroke-width="2"/></svg>
<div style="left:739px;top:210px;width:19px;height:2px;background:#ff0000"></div>
<div style="left:763px;top:203px;height:16px;line-height:16px;font-size:11px;color:#ff0000;white-space:nowrap">mag_e_theta</div>
<div style="left:723px;top:222px;width:12px;height:12px;box-sizing:border-box;border-top:2px solid #707070;border-left:2px solid #707070;border-right:1px solid #e0e0e0;border-bottom:1px solid #e0e0e0;background:#fff"></div>
<svg style="left:725px;top:224px" width="10" height="9"><path d="M1 4l2.5 3l4.5-6" fill="none" stroke="#000" stroke-width="2"/></svg>
<div style="left:739px;top:227px;width:19px;height:2px;background:#6a6ab8"></div>
<div style="left:763px;top:220px;height:16px;line-height:16px;font-size:11px;color:#1c1c99;white-space:nowrap">mag_e_phi</div>
<div style="left:723px;top:239px;width:12px;height:12px;box-sizing:border-box;border-top:2px solid #707070;border-left:2px solid #707070;border-right:1px solid #e0e0e0;border-bottom:1px solid #e0e0e0;background:#fff"></div>
<svg style="left:725px;top:241px" width="10" height="9"><path d="M1 4l2.5 3l4.5-6" fill="none" stroke="#000" stroke-width="2"/></svg>
<div style="left:739px;top:244px;width:19px;height:2px;background:#6ab06a"></div>
<div style="left:763px;top:237px;height:16px;line-height:16px;font-size:11px;color:#008000;white-space:nowrap">mag_e_total</div>
<div style="position:absolute;left:37px;top:765px;width:829px;height:2px;background:#c8c8c8"></div>
<div style="position:absolute;left:37px;top:767px;width:829px;height:1px;background:#a0a0a0"></div>
<div style="position:absolute;left:38px;top:769px;width:828px;height:13px;background:#f0ecec"></div>
<div style="position:absolute;left:37px;top:783px;width:829px;height:1px;background:#999"></div>
<div style="position:absolute;left:38px;top:785px;width:828px;height:16px;background:#f0ecec"></div>
<div style="position:absolute;left:36.8px;top:769px;width:120px;text-align:center;height:15px;line-height:15px;font-size:12px;color:#000;-webkit-text-stroke:0.45px #000">X-Cursor</div>
<div style="position:absolute;left:154px;top:785px;width:1px;height:16px;background:#c8c8c8"></div>
<div style="position:absolute;left:154.8px;top:769px;width:120px;text-align:center;height:15px;line-height:15px;font-size:12px;color:#000;-webkit-text-stroke:0.45px #000">Y-Cursor</div>
<div style="position:absolute;left:272px;top:785px;width:1px;height:16px;background:#c8c8c8"></div>
<div style="position:absolute;left:272.6px;top:769px;width:120px;text-align:center;height:15px;line-height:15px;font-size:12px;color:#000;-webkit-text-stroke:0.45px #000">V-Caliper</div>
<div style="position:absolute;left:390px;top:785px;width:1px;height:16px;background:#c8c8c8"></div>
<div style="position:absolute;left:390.6px;top:769px;width:120px;text-align:center;height:15px;line-height:15px;font-size:12px;color:#000;-webkit-text-stroke:0.45px #000">H-Cal (dX)</div>
<div style="position:absolute;left:508px;top:785px;width:1px;height:16px;background:#c8c8c8"></div>
<div style="position:absolute;left:508.5px;top:769px;width:120px;text-align:center;height:15px;line-height:15px;font-size:12px;color:#000;-webkit-text-stroke:0.45px #000">H-Cal (1/dX)</div>
<div style="position:absolute;left:626px;top:785px;width:1px;height:16px;background:#c8c8c8"></div>
<div style="position:absolute;left:626.4px;top:769px;width:120px;text-align:center;height:15px;line-height:15px;font-size:12px;color:#000;-webkit-text-stroke:0.45px #000">Horz-D</div>
<div style="position:absolute;left:744px;top:785px;width:1px;height:16px;background:#c8c8c8"></div>
<div style="position:absolute;left:744.2px;top:769px;width:120px;text-align:center;height:15px;line-height:15px;font-size:12px;color:#000;-webkit-text-stroke:0.45px #000">Vert-D</div>
<div style="position:absolute;left:861px;top:785px;width:1px;height:16px;background:#c8c8c8"></div>
<div style="left:8px;top:810px;width:866px;height:22px;background:#f0eded;border:1px solid #fff;box-sizing:border-box"></div>
<svg style="left:862px;top:820px" width="12" height="12"><g fill="#b4b4b4"><rect x="9" y="2" width="2" height="2"/><rect x="6" y="5" width="2" height="2"/><rect x="9" y="5" width="2" height="2"/><rect x="3" y="8" width="2" height="2"/><rect x="6" y="8" width="2" height="2"/><rect x="9" y="8" width="2" height="2"/></g></svg>
</body></html>
